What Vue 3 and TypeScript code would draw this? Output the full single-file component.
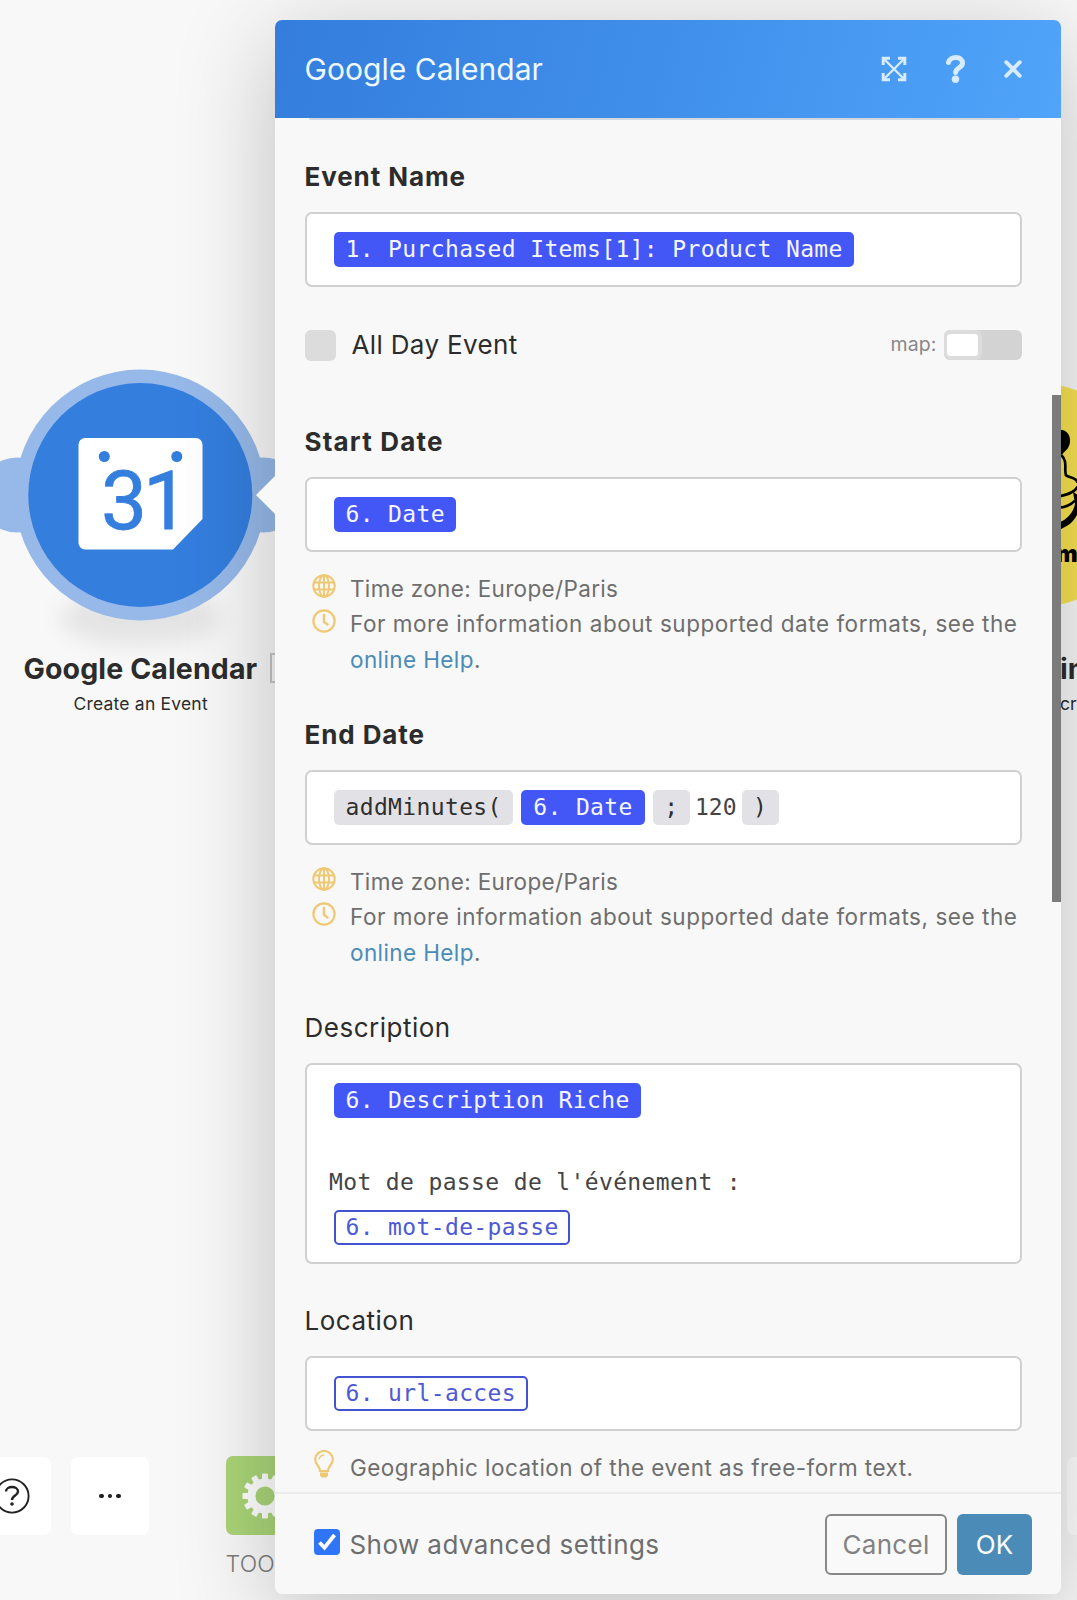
<script setup lang="ts">
type Chip = { kind: 'value' | 'outline' | 'fn' | 'text'; text: string }
type Row = Chip[]
type Hint = { icon: 'globe' | 'clock' | 'bulb'; text: string; link?: string }
type Field = { id: string; label: string; required: boolean; rows: Row[]; hints: Hint[] }

const dateHints: Hint[] = [
  { icon: 'globe', text: 'Time zone: Europe/Paris' },
  { icon: 'clock', text: 'For more information about supported date formats, see the ', link: 'online Help' },
]

const eventName: Row = [{ kind: 'value', text: '1. Purchased Items[1]: Product Name' }]

const fields: Field[] = [
  { id: 'start', label: 'Start Date', required: true, rows: [[{ kind: 'value', text: '6. Date' }]], hints: dateHints },
  {
    id: 'end',
    label: 'End Date',
    required: true,
    rows: [[
      { kind: 'fn', text: 'addMinutes(' },
      { kind: 'value', text: '6. Date' },
      { kind: 'fn', text: ';' },
      { kind: 'text', text: '120' },
      { kind: 'fn', text: ')' },
    ]],
    hints: dateHints,
  },
  {
    id: 'description',
    label: 'Description',
    required: false,
    rows: [
      [{ kind: 'value', text: '6. Description Riche' }],
      [],
      [{ kind: 'text', text: "Mot de passe de l'événement :" }],
      [{ kind: 'outline', text: '6. mot-de-passe' }],
    ],
    hints: [],
  },
  {
    id: 'location',
    label: 'Location',
    required: false,
    rows: [[{ kind: 'outline', text: '6. url-acces' }]],
    hints: [{ icon: 'bulb', text: 'Geographic location of the event as free-form text.' }],
  },
]

const teeth = Array.from({ length: 12 }, (_, i) => i * 30)
</script>

<template>
  <div class="page">
    <!-- Scenario canvas -->
    <div class="node-shadow"></div>
    <svg class="node" width="275" height="270" viewBox="0 360 275 270">
      <g fill="#96b9e9">
        <circle cx="17" cy="495" r="37.5" />
        <circle cx="264" cy="495" r="37.5" />
        <circle cx="140.3" cy="495" r="125.5" />
      </g>
      <circle cx="140.3" cy="495" r="112" fill="#347ede" />
      <path d="M85 438H196a6.500 6.500 0 0 1 6.500 6.500V519L173 549.500H85a6.500 6.500 0 0 1-6.500-6.500V444.500A6.500 6.500 0 0 1 85 438Z" fill="#fff" />
      <circle cx="104.300" cy="456.500" r="5.500" fill="#347ede" />
      <circle cx="176.800" cy="456.500" r="5.500" fill="#347ede" />
      <text class="day" x="101 143" y="529">31</text>
    </svg>
    <div class="node-label main-label">Google Calendar</div>
    <div class="node-sub main-sub">Create an Event</div>
    <div class="badge"></div>

    <svg class="next-node" width="40" height="240" viewBox="1037 380 40 240">
      <circle cx="1037" cy="495" r="112" fill="#f8e251" />
      <g transform="translate(1061 430) scale(.33333)">
        <path d="M-10 0C20-4 31 20 26 42C22 58 12 62 5 72L-10 72Z" />
        <path d="M0 74C22 95 8 118 15 136C30 146 44 140 50 158M50 170C42 186 22 194 -5 199M-5 233C14 232 30 224 42 212" fill="none" stroke="#000" stroke-width="8" />
        <path d="M-5 277C20 268 38 245 42 222L36 185L50 195V250C40 275 20 290 -5 299Z" />
      </g>
    </svg>
    <div class="chimp">m</div>
    <div class="node-label next-label">in</div>
    <div class="node-sub next-sub">cr</div>

    <div class="tool help">
      <svg width="36" height="36" viewBox="0 0 36 36" fill="none" stroke="#222">
        <circle cx="18" cy="18" r="16.600" stroke-width="1.900" />
        <path d="M12 13.500C12 7.500 24 7.500 24 13.500C24 17.500 18 17.500 18 22" stroke-width="2.400" />
        <circle cx="18" cy="26" r="1.800" fill="#222" stroke="none" />
      </svg>
    </div>
    <div class="tool more"><i></i><i></i><i></i></div>
    <div class="tool gear">
      <svg width="46" height="46" viewBox="-23 -23 46 46">
        <rect v-for="a in teeth" :key="a" x="-3" y="-22.500" width="6" height="9" rx="1" fill="#fff" :transform="`rotate(${a})`" />
        <circle r="13.600" fill="none" stroke="#fff" stroke-width="8" />
      </svg>
    </div>
    <div class="tool far"></div>
    <div class="tools-label">TOOLS</div>

    <!-- Module settings dialog -->
    <section class="panel">
      <header class="head">
        <h1>Google Calendar</h1>
        <div class="actions">
          <svg width="26" height="26" viewBox="0 0 26 26" fill="none" stroke="#d8ecfe">
            <path d="M2 2L24 24M24 2L2 24" stroke-width="2.300" />
            <path d="M2.200 9V2.200H9M17 2.200H23.800V9M23.800 17V23.800H17M9 23.800H2.200V17" stroke-width="3" />
          </svg>
          <svg width="20" height="28" viewBox="0 0 20 28">
            <path d="M2.500 7.500C4 .8 16.500 1 16.500 8C16.500 13 10 12.500 9.600 17.500" fill="none" stroke="#d8ecfe" stroke-width="5" stroke-linecap="round" />
            <circle cx="9.500" cy="24.300" r="3.700" fill="#d8ecfe" />
          </svg>
          <svg width="18" height="18" viewBox="0 0 18 18">
            <path d="M2.200 2.200L15.800 15.800M15.800 2.200L2.200 15.800" stroke="#d8ecfe" stroke-width="3.800" stroke-linecap="round" />
          </svg>
        </div>
      </header>

      <div class="body">
        <div class="prev-input"></div>
        <div class="field">
          <div class="label required">Event Name</div>
          <div class="input">
            <div class="row"><span v-for="c in eventName" :key="c.text" :class="['chip', c.kind]">{{ c.text }}</span></div>
          </div>
        </div>

        <div class="all-day">
          <span class="box"></span>
          <span class="all-day-text">All Day Event</span>
          <span class="map">map:</span>
          <span class="toggle"><i></i></span>
        </div>

        <div v-for="f in fields" :key="f.id" :class="['field', f.id]">
          <div :class="['label', { required: f.required }]">{{ f.label }}</div>
          <div class="input">
            <div v-for="(r, i) in f.rows" :key="i" :class="['row', { blank: !r.length }]">
              <span v-for="(c, j) in r" :key="j" :class="['chip', c.kind]">{{ c.text }}</span>
            </div>
          </div>
          <div v-if="f.hints.length" class="hints">
            <div v-for="h in f.hints" :key="h.icon" :class="['hint', h.icon]">
              <span class="hint-icon">
                <svg v-if="h.icon === 'globe'" width="24" height="24" viewBox="0 0 24 24" fill="none" stroke="#f0c873" stroke-width="2">
                  <circle cx="12" cy="12" r="10.700" />
                  <ellipse cx="12" cy="12" rx="5" ry="10.700" />
                  <path d="M12 1V23M1.500 8.500H22.500M1.500 15.500H22.500" />
                </svg>
                <svg v-else-if="h.icon === 'clock'" width="24" height="24" viewBox="0 0 24 24" fill="none" stroke="#f0c873" stroke-width="2.200">
                  <circle cx="12" cy="12" r="10.600" />
                  <path d="M12 6V13L15.500 15.500" stroke-width="2.400" stroke-linecap="round" />
                </svg>
                <svg v-else width="20" height="28" viewBox="0 0 20 28" fill="none" stroke="#f0c873" stroke-width="2.200">
                  <path d="M6 21C6 16 1.200 14.500 1.200 9.500A8.800 8.500 0 0 1 18.800 9.500C18.800 14.500 14 16 14 21Z" />
                  <path d="M5.300 9.500A4.700 4.500 0 0 1 10 5" stroke-width="1.500" />
                  <path d="M6 22.500H14V25.500L12.500 27.500H7.500L6 25.500Z" fill="#f0c873" stroke="none" />
                </svg>
              </span>
              <p>{{ h.text }}<template v-if="h.link"><br /><a>{{ h.link }}</a>.</template></p>
            </div>
          </div>
        </div>
      </div>

      <footer class="foot">
        <span class="check">
          <svg width="26" height="26" viewBox="0 0 26 26"><path d="M5.500 13.500L10.500 18.700L20.500 6" fill="none" stroke="#fff" stroke-width="3.800" /></svg>
        </span>
        <span class="advanced">Show advanced settings</span>
        <button class="cancel">Cancel</button>
        <button class="ok">OK</button>
      </footer>
      <div class="scrollbar"></div>
    </section>
    <div class="pointer"></div>
  </div>
</template>

<style>
body { margin: 0; }
</style>

<style scoped>
.page { position: relative; width: 1077px; height: 1600px; overflow: hidden; background: #f8f8f8; font-family: Inter, "Liberation Sans", sans-serif; color: #2c2c2c; white-space: nowrap; }
.page * { box-sizing: border-box; }
svg { display: block; }

.node-shadow { position: absolute; left: 60px; top: 590px; width: 160px; height: 56px; border-radius: 50%; background: rgba(0, 0, 0, .08); filter: blur(11px); }
.node { position: absolute; left: 0; top: 360px; }
.day { font: 400 82px Roboto, "Liberation Sans", sans-serif; fill: #347ede; stroke: #347ede; stroke-width: .8; }
.node-label { position: absolute; font-size: 28.500px; font-weight: 700; line-height: 36px; }
.node-sub { position: absolute; font-size: 17.500px; line-height: 24px; }
.main-label { left: 23.500px; top: 651px; letter-spacing: .12px; }
.main-sub { left: 73.500px; top: 691.500px; letter-spacing: .2px; }
.badge { position: absolute; left: 270px; top: 653px; width: 30px; height: 30px; border: 2px solid #c4c4c4; }
.next-node { position: absolute; left: 1037px; top: 380px; }
.chimp { position: absolute; left: 1056px; top: 542px; font-size: 23px; font-weight: 900; line-height: 24px; color: #000; }
.next-label { left: 1060px; top: 651px; }
.next-sub { left: 1060px; top: 692px; }

.tool { position: absolute; top: 1457px; width: 78px; height: 78px; border-radius: 7px; background: #fff; display: flex; align-items: center; justify-content: center; }
.help { left: -27px; padding-right: 1px; }
.more { left: 71px; gap: 4px; }
.more i { width: 4.400px; height: 4.400px; border-radius: 50%; background: #1c1c1c; }
.gear { left: 226px; top: 1456px; height: 79px; background: #aad578; }
.far { left: 1067px; }
.tools-label { position: absolute; left: 225.500px; top: 1550px; font-size: 23px; line-height: 28px; font-weight: 300; color: #7c7c7c; letter-spacing: .2px; }

.panel { position: absolute; left: 275px; top: 20px; width: 786px; height: 1574px; display: flex; flex-direction: column; border-radius: 7px; background: #f8f8f8; box-shadow: 0 20px 100px rgba(0, 0, 0, .23); }
.pointer { position: absolute; left: 256px; top: 475px; width: 20px; height: 40px; background: #f8f8f8; clip-path: polygon(0 50%, 100% 0, 100% 100%); }
.head { flex: 0 0 98px; display: flex; align-items: center; justify-content: space-between; padding: 0 39px 0 29.500px; border-radius: 7px 7px 0 0; background: linear-gradient(104deg, #347ddd 0%, #3f8fea 48%, #50a4f9 100%); }
.head h1 { margin: 0; font-size: 30px; line-height: 40px; font-weight: 400; color: #f0f8ff; letter-spacing: .05px; }
.actions { display: flex; align-items: center; margin-top: -1px; }
.actions svg:nth-child(1) { margin-right: 39px; }
.actions svg:nth-child(2) { margin-right: 38.500px; }

.body { flex: 1; min-height: 0; overflow: hidden; padding: 0 39px 0 30px; }
.prev-input { height: 2px; margin: 0 2px 0 4px; background: #d2d7e2; border-radius: 0 0 4px 4px; }
.field { margin-bottom: 39.500px; }
.prev-input + .field { margin-top: 39.300px; margin-bottom: 0; }
.label { height: 36px; margin-bottom: 17px; margin-left: -.5px; font-size: 26px; line-height: 36px; letter-spacing: .5px; }
.label.required { font-weight: 700; letter-spacing: .9px; }
.start .label { letter-spacing: 1.200px; }
.input { padding: 17.500px 22px; border: 2px solid #d0d0d0; border-radius: 7px; background: #fff; }
.row { display: flex; align-items: center; height: 36px; color: #444; font: 23px/35px "DejaVu Sans Mono", monospace; letter-spacing: .36px; }
.row.blank { height: 46px; }
.row.blank + .row { height: 36px; }
.row.blank + .row + .row { height: 34px; margin-top: 10px; }
.chip { height: 35px; line-height: 34px; }
.chip.value, .chip.outline, .chip.fn { margin: 0 3px 0 5px; padding: 0 11.500px 0 11.500px; border-radius: 5px; }
.chip.value { background: #4357f6; color: #f4f5ff; }
.chip.fn + .chip.value { padding: 0 12px; }
.chip.outline { padding: 0 9.500px; line-height: 31px; border: 2px solid #4353d0; color: #4d5ad4; }
.chip.fn { background: #e2e2e6; color: #2f2f2f; }
.chip.fn + .chip.text { margin-left: 2px; letter-spacing: 0; }

.all-day { display: flex; align-items: center; height: 36px; margin: 40px 0 60.700px; }
.box { width: 31px; height: 31px; margin-top: 1px; border-radius: 6px; background: #dcdcdc; }
.all-day-text { margin: -1px 0 0 15.500px; font-size: 26px; letter-spacing: .35px; }
.map { margin: -3px 7.500px 0 auto; font-size: 19.500px; color: #888; letter-spacing: .1px; }
.toggle { width: 78px; height: 30px; margin-top: -1px; border-radius: 6px; background: #d3d3d3; }
.toggle i { display: block; width: 38px; height: 30px; border: 4px solid #dcdcdc; border-left-width: 3px; border-radius: 7px; background: #fff; }

.hints { margin-top: 19px; color: #6e6e6e; }
.hint { display: flex; }
.hint-icon { width: 45px; padding: 3px 0 0 7px; flex: none; }
.bulb .hint-icon { padding: 0 0 0 9px; }
.hint p { margin: 0; font-size: 22.500px; line-height: 35.500px; letter-spacing: .54px; }
.hint.globe p { letter-spacing: .34px; }
.hint.bulb p { letter-spacing: .46px; }
.hint a { color: #4a8bb7; letter-spacing: .4px; }

.foot { flex: 0 0 102px; display: flex; align-items: center; padding: 0 29px 0 39.500px; border-top: 2px solid #ebebeb; }
.check { width: 26px; height: 26px; margin-top: -4px; margin-left: -.5px; border-radius: 4px; background: #2f76f6; }
.advanced { margin-top: 1px; margin-left: 9.500px; margin-right: auto; font-size: 26px; color: #6e6e6e; letter-spacing: .42px; }
button { height: 61px; padding: 0; border-radius: 6px; font: 26px Inter, sans-serif; }
.cancel { width: 122px; border: 2px solid #888; background: #f9f9f9; color: #828282; letter-spacing: .3px; }
.ok { width: 75px; margin-left: 10px; border: 0; background: #4a8bb7; color: #fff; }
.scrollbar { position: absolute; right: 0; top: 375px; width: 9px; height: 507px; background: #7b7b7b; }
</style>
